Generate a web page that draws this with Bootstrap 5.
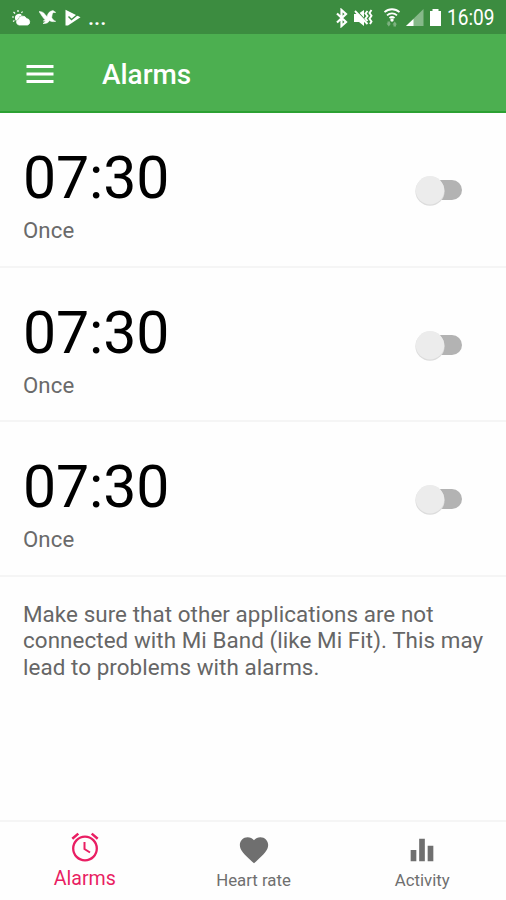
<!DOCTYPE html>
<html lang="en">
<head>
<meta charset="utf-8">
<meta name="viewport" content="width=device-width, initial-scale=1">
<title>Alarms</title>
<link href="https://cdn.jsdelivr.net/npm/bootstrap@5.3.0/dist/css/bootstrap.min.css" rel="stylesheet">
<style>
body{font-family:Roboto,"Liberation Sans",sans-serif;background:#fefefe;color:#000}
svg{display:block;flex:none}
.statusbar{height:34px;background:#3c8c40;color:#fff;padding:1px 13px 0 11px}
.ellipsis{font-size:22px;font-weight:500;line-height:30px;margin-left:7px}
.clock{width:46px;font-size:22.2px;line-height:33px;margin-left:5px;white-space:nowrap;transform:scaleX(.86);transform-origin:0 50%}
.appbar{height:79px;background:#4caf50;border-bottom:2px solid #2ca132;padding:0 25px}
.appbar svg{margin-top:2px}
.appbar h1{font-size:27.9px;font-weight:500;line-height:32px;margin:4px 0 0 48px;color:#fff}
.alarm{height:154.5px;border-bottom:2px solid #f5f5f5;padding:30px 43px 0 23px}
.time{font-size:59px;line-height:70px;letter-spacing:-.1px}
.repeat{font-size:22.2px;line-height:26px;color:#6a6a6a;margin-top:4px;letter-spacing:.1px}
.toggle{width:48px;height:34px;padding:0;border:0;background:none;margin-top:31px}
.hint{font-size:22.4px;line-height:26.4px;color:#666;padding:24.500px 0 0 23px;letter-spacing:.07px}
.tabs{height:80px;border-top:2px solid #f5f5f5}
.tab{color:#6f6f6f;font-size:16.8px;line-height:20px;padding:11px 0 0 1px}
.tab svg{margin-bottom:3px}
.tab.current{color:#e91e63;font-size:19.6px;line-height:23px;padding-top:8px}
</style>
<script src="https://cdn.jsdelivr.net/npm/bootstrap@5.3.0/dist/js/bootstrap.bundle.min.js"></script>
</head>
<body>
<div class="vh-100 d-flex flex-column overflow-hidden">
  <div class="statusbar d-flex align-items-center">
    <svg width="20" height="18" viewBox="0 0 20 18" fill="#fff"><path d="M4 9.500a4 4 0 0 1 7-3.200a5.500 5.500 0 0 0-3.800 3.500L5 12A4 4 0 0 1 4 9.500z"/><path d="M7 1v2M2.500 3l1.600 1.500M1 8h2M11.500 2.500l-1 1.500M2 12.500l1.500-1" stroke="#fff" stroke-width="1.200"/><path d="M8 16a3 3 0 0 1-.4-5.800a4.300 4.300 0 0 1 8-.6A3.300 3.300 0 0 1 16.500 16z" stroke="#fff" stroke-width=".8"/></svg>
    <svg class="ms-2" width="18" height="18" viewBox="0 0 18 18" fill="#fff"><path d="M0 2.500c2.500 0 4.500.8 6 3l2.200 2.300C8.500 4.500 10.500 2 14 1.600l2.700 1.800-2.500.2c-1.200 1.200-1.200 3-1.500 5 .8 1.800 2 3.200 4 3.700-3 .7-5 .1-6.200-.8-1 2-3 3.300-6.500 3l2.800-2.200-2.500-.3 2-1C4 9 2.500 6 0 2.500z" stroke="#fff" stroke-width=".6"/></svg>
    <svg class="ms-2" width="16" height="18" viewBox="0 0 16 18"><path fill="#fff" d="M.5.800 15.500 8.200 3 16.500H.5z"/><path d="m3.500 7.500 3 3 8-6.500" fill="none" stroke="#3c8c40" stroke-width="1.400"/></svg>
    <span class="ellipsis">...</span>
    <svg class="ms-auto" width="14" height="20" viewBox="0 0 14 20"><path d="m2 5.500 9 8.500-4.500 4V2L11 6l-9 8.500" fill="none" stroke="#fff" stroke-width="2.200"/></svg>
    <svg class="ms-1" width="22" height="20" viewBox="0 0 22 20"><path fill="#fff" d="M1 6h4l6-4v16l-5-4H1z"/><path d="m3 2 12 13" stroke="#3c8c40" stroke-width="1.200"/><path d="m2 3 12.500 13M14.500 3l-2 2.500 2 2.500-2 2.500 2 2.500M18.500 2l-2 3 2 2.800-2 3 2 2.800-1.500 2.500" fill="none" stroke="#fff" stroke-width="1.900"/></svg>
    <svg style="margin-left:8px" width="18" height="20" viewBox="0 0 18 20"><path d="M1.500 4.200a11 11 0 0 1 15 0M4 7.300a7.500 7.500 0 0 1 10 0M6.500 10a4 4 0 0 1 5 0" fill="none" stroke="#fff" stroke-width="1.800"/><circle cx="9" cy="12" r="1.700" fill="#fff"/><path d="M4.500 13.500H7v2h1l-2.200 3-2.300-3h1zM10.500 18.500v-2h-1l2.200-3 2.300 3h-1v2z" fill="#7db180"/></svg>
    <svg style="margin-left:4px" width="20" height="20" viewBox="0 0 20 20"><path fill="#86b989" d="M1 18 18.500 1v17z"/><path fill="#fff" d="m1 18 7.500-7v7z"/></svg>
    <svg style="margin-left:4px" width="13" height="20" viewBox="0 0 13 20"><path fill="#fff" d="M3.500 1h6v2H12v15H1V3h2.500z"/></svg>
    <span class="clock">16:09</span>
  </div>
  <header class="appbar d-flex align-items-center">
    <svg width="29" height="20" viewBox="0 0 29 20" fill="#fff"><path d="M1.500 1h27v3h-27zM1.500 8.500h27v3h-27zM1.500 16h27v3h-27z"/></svg>
    <h1>Alarms</h1>
  </header>
  <main class="flex-grow-1">
    <section class="alarm d-flex justify-content-between">
      <div><div class="time">07:30</div><div class="repeat">Once</div></div>
      <button class="toggle" aria-label="Toggle alarm"><svg width="48" height="34" viewBox="0 0 48 34"><rect x="12" y="6" width="35" height="20" rx="10" fill="#b3b3b3"/><circle cx="15" cy="17.200" r="14.600" fill="#dcdcdc"/><circle cx="15" cy="16.200" r="14.200" fill="#ececec"/></svg></button>
    </section>
    <section class="alarm d-flex justify-content-between">
      <div><div class="time">07:30</div><div class="repeat">Once</div></div>
      <button class="toggle" aria-label="Toggle alarm"><svg width="48" height="34" viewBox="0 0 48 34"><rect x="12" y="6" width="35" height="20" rx="10" fill="#b3b3b3"/><circle cx="15" cy="17.200" r="14.600" fill="#dcdcdc"/><circle cx="15" cy="16.200" r="14.200" fill="#ececec"/></svg></button>
    </section>
    <section class="alarm d-flex justify-content-between">
      <div><div class="time">07:30</div><div class="repeat">Once</div></div>
      <button class="toggle" aria-label="Toggle alarm"><svg width="48" height="34" viewBox="0 0 48 34"><rect x="12" y="6" width="35" height="20" rx="10" fill="#b3b3b3"/><circle cx="15" cy="17.200" r="14.600" fill="#dcdcdc"/><circle cx="15" cy="16.200" r="14.200" fill="#ececec"/></svg></button>
    </section>
    <p class="hint mb-0">Make sure that other applications are not<br>connected with Mi Band (like Mi Fit). This may<br>lead to problems with alarms.</p>
  </main>
  <nav class="tabs row g-0 text-center">
    <div class="tab current col d-flex flex-column align-items-center">
      <svg width="34" height="34" viewBox="0 0 34 34" fill="none" stroke="#e91e63"><circle cx="17" cy="18.500" r="11.800" stroke-width="2.300"/><path d="m4.300 8.800 6-5.200M29.700 8.800l-6-5.200" stroke-width="2.500"/><path d="M16.500 12v7l5.500 3.500" stroke-width="2"/></svg>
      <span>Alarms</span>
    </div>
    <div class="tab col d-flex flex-column align-items-center">
      <svg width="34" height="34" viewBox="0 0 24 24" fill="#6f6f6f"><path d="m12 21.350-1.450-1.320C5.400 15.360 2 12.280 2 8.500 2 5.420 4.420 3 7.500 3c1.740 0 3.410.81 4.500 2.090C13.090 3.810 14.760 3 16.500 3 19.580 3 22 5.420 22 8.500c0 3.780-3.400 6.860-8.550 11.540z"/></svg>
      <span>Heart rate</span>
    </div>
    <div class="tab col d-flex flex-column align-items-center">
      <svg width="34" height="34" viewBox="0 0 24 24" fill="#6f6f6f"><path d="M10 20h4V4h-4zM4 20h4v-8H4zM16 9v11h4V9z"/></svg>
      <span>Activity</span>
    </div>
  </nav>
</div>
</body>
</html>
